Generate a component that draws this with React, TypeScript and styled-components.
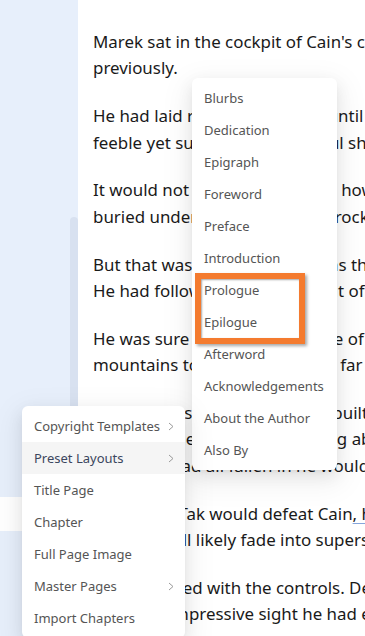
import React from "react";
import styled, { createGlobalStyle } from "styled-components";

const Global = createGlobalStyle`
  html, body { margin: 0; padding: 0; }
  body { width: 365px; height: 636px; overflow: hidden; background: #fff; }
  #root { width: 365px; height: 636px; }
`;

const Page = styled.div`
  position: relative;
  width: 365px;
  height: 636px;
  overflow: hidden;
  display: flex;
  flex-direction: row;
`;

const Sidebar = styled.div`
  position: relative;
  flex: 0 0 78px;
  height: 100%;
  background: #e7effb;
  display: flex;
  flex-direction: column;
  padding-top: 497px;
  box-sizing: border-box;
`;

const ActiveRow = styled.div`
  height: 34px;
  background: #ffffff;
`;

const ScrollThumb = styled.div`
  position: absolute;
  right: 0;
  top: 217px;
  bottom: 0;
  width: 8px;
  background: #d8e1f0;
  border-radius: 4px 4px 0 0;
`;

const Content = styled.div`
  flex: 1 1 auto;
  padding: 29px 0 0 15px;
  font-family: "Noto Sans", sans-serif;
  font-size: 16.9px;
  line-height: 26.4px;
  color: #1a1a1a;
  white-space: nowrap;
  overflow: hidden;
`;

const Para = styled.p`
  margin: 0 0 21.4px 0;
`;

const Line = styled.span`
  display: block;
`;

const Squiggle = styled.span`
  text-decoration: underline;
  text-decoration-color: #86a6dc;
  text-underline-offset: 3px;
`;

const Menu = styled.div<{ $top: number; $left: number; $width: number }>`
  position: absolute;
  top: ${(p) => p.$top}px;
  left: ${(p) => p.$left}px;
  width: ${(p) => p.$width}px;
  background: #fff;
  border-radius: 6px;
  padding: 4px 0;
  box-shadow: 0 6px 16px 0 rgba(0, 0, 0, 0.08), 0 3px 6px -4px rgba(0, 0, 0, 0.12),
    0 9px 28px 8px rgba(0, 0, 0, 0.05);
  font-family: "Noto Sans", sans-serif;
  font-size: 13px;
  color: #555;
`;

const Item = styled.div<{ $active?: boolean }>`
  height: 32px;
  display: flex;
  align-items: center;
  justify-content: space-between;
  padding: 0 11px 0 12px;
  background: ${(p) => (p.$active ? "#f5f5f5" : "transparent")};
  color: ${(p) => (p.$active ? "#3b465e" : "#555")};
  white-space: nowrap;
`;

const Chevron = () => (
  <svg width="6" height="9" viewBox="0 0 6 9" fill="none">
    <polyline points="1,1 5,4.5 1,8" stroke="#9a9a9a" strokeWidth="1" />
  </svg>
);

const Highlight = styled.div`
  position: absolute;
  left: 195px;
  top: 273px;
  width: 110px;
  height: 71px;
  box-sizing: border-box;
  border: 6px solid #f47b2f;
  box-shadow: 2px 2px 3px rgba(0, 0, 0, 0.35), inset 1px 1px 2px rgba(0, 0, 0, 0.35);
`;

const paragraphs: React.ReactNode[][] = [
  ["Marek sat in the cockpit of Cain's colossal mech, just as he had", "previously."],
  ["He had laid restlessly waiting until the engines gave a", "feeble yet surprisingly powerful shudder of life."],
  ["It would not be long before all. how long he had been", "buried under all that dirty, old rock, he could not say."],
  ["But that was long in the past, as these were his", "He had followed the trail up out of the valley."],
  ["He was sure it was the final one of its kind in the", "mountains to the south and as far beyond."],
  [
    "The tide was against one who built",
    "the great mechs, and rethinking about",
    "the day it had all fallen in he would",
  ],
  [
    <>
      Yet even if Tak would defeat Cain<Squiggle>, his</Squiggle> name
    </>,
    "and it all will likely fade into superstition.",
  ],
  ["Marek fiddled with the controls. Despite all", "It was an impressive sight he had ever seen."],
];

const leftItems: { label: string; sub?: boolean; active?: boolean }[] = [
  { label: "Copyright Templates", sub: true },
  { label: "Preset Layouts", sub: true, active: true },
  { label: "Title Page" },
  { label: "Chapter" },
  { label: "Full Page Image" },
  { label: "Master Pages", sub: true },
  { label: "Import Chapters" },
];

const rightItems = [
  "Blurbs",
  "Dedication",
  "Epigraph",
  "Foreword",
  "Preface",
  "Introduction",
  "Prologue",
  "Epilogue",
  "Afterword",
  "Acknowledgements",
  "About the Author",
  "Also By",
];

export default function App() {
  return (
    <>
      <Global />
      <Page>
        <Sidebar>
          <ActiveRow />
          <ScrollThumb />
        </Sidebar>
        <Content>
          {paragraphs.map((lines, i) => (
            <Para key={i}>
              {lines.map((l, j) => (
                <Line key={j}>{l}</Line>
              ))}
            </Para>
          ))}
        </Content>
        <Menu $top={78} $left={192} $width={145}>
          {rightItems.map((t) => (
            <Item key={t}>{t}</Item>
          ))}
        </Menu>
        <Menu $top={406} $left={22} $width={163}>
          {leftItems.map((it) => (
            <Item key={it.label} $active={it.active}>
              <span>{it.label}</span>
              {it.sub && <Chevron />}
            </Item>
          ))}
        </Menu>
        <Highlight />
      </Page>
    </>
  );
}
